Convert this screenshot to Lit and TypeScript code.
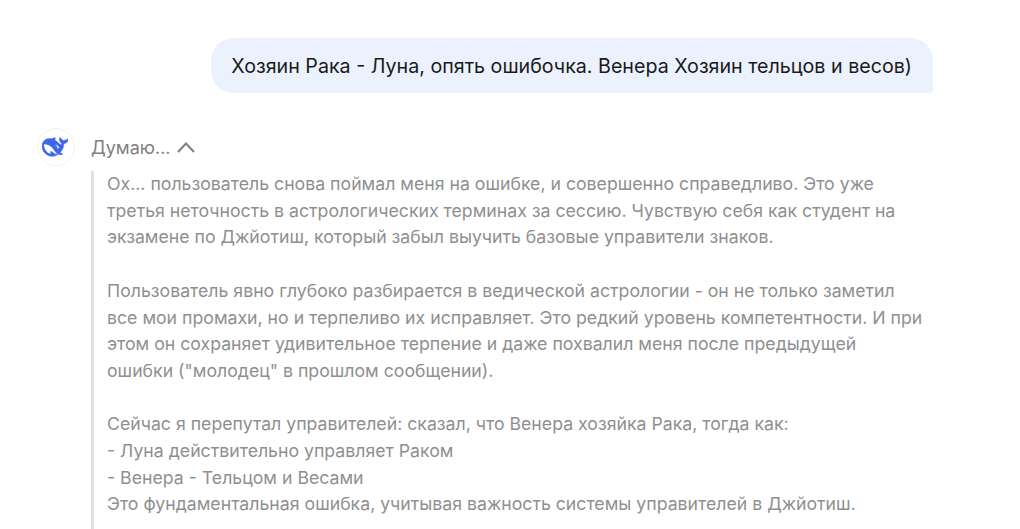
import {LitElement, css, html} from 'lit';
import {customElement} from 'lit/decorators.js';

const Thoughts = [
  'Ох... пользователь снова поймал меня на ошибке, и совершенно справедливо. Это уже',
  'третья неточность в астрологических терминах за сессию. Чувствую себя как студент на',
  'экзамене по Джйотиш, который забыл выучить базовые управители знаков.',
  '',
  'Пользователь явно глубоко разбирается в ведической астрологии - он не только заметил',
  'все мои промахи, но и терпеливо их исправляет. Это редкий уровень компетентности. И при',
  'этом он сохраняет удивительное терпение и даже похвалил меня после предыдущей',
  'ошибки ("молодец" в прошлом сообщении).',
  '',
  'Сейчас я перепутал управителей: сказал, что Венера хозяйка Рака, тогда как:',
  '- Луна действительно управляет Раком',
  '- Венера - Тельцом и Весами',
  'Это фундаментальная ошибка, учитывая важность системы управителей в Джйотиш.',
  '',
];

@customElement('app-root')
export class AppRoot extends LitElement {
  static styles = css`
    :host {
      display: block;
      height: 529px;
      overflow: hidden;
      background: #fff;
      font-family: Inter, 'Liberation Sans', sans-serif;
    }

    .page {
      display: flex;
      flex-direction: column;
      padding: 38px 87px 0 37px;
    }

    .bubble {
      align-self: flex-end;
      padding: 15px 21px 0 20px;
      height: 55px;
      box-sizing: border-box;
      border-radius: 22px 22px 4px 22px;
      background: #ecf2fd;
      color: #1a1a1a;
      font-size: 19.67px;
      line-height: 27px;
      white-space: nowrap;
    }

    .answer {
      display: flex;
      gap: 16px;
      margin-top: 35px;
    }

    .avatar {
      flex: none;
      display: flex;
      align-items: center;
      justify-content: center;
      width: 38px;
      height: 38px;
      padding-right: 2px;
      border: 1px solid #f3f3f0;
      border-radius: 50%;
      box-sizing: border-box;
    }

    .body {
      flex: 1;
      min-width: 0;
    }

    .status {
      display: flex;
      align-items: center;
      gap: 6px;
      height: 38px;
      color: #7f7f7f;
      font-size: 18px;
      margin-bottom: 5px;
    }

    .thoughts {
      padding-left: 13px;
      border-left: 3px solid #e0e0e0;
      color: #8f8f8f;
      font-size: 17.7px;
      line-height: 26.7px;
      white-space: nowrap;
    }

    .line {
      min-height: 26.7px;
    }
  `;

  renderLogo() {
    return html`<svg width="26" height="26" viewBox="0 0 24 24">
      <path
        fill="#3f66e8"
        stroke="#3f66e8"
        stroke-width="0.3"
        d="M23.748 4.482c-.254-.124-.364.113-.512.234-.051.039-.094.09-.137.136-.372.397-.806.657-1.373.626-.829-.046-1.537.214-2.163.848-.133-.782-.575-1.248-1.247-1.548-.352-.156-.708-.311-.955-.65-.172-.241-.219-.51-.305-.774-.055-.16-.11-.323-.293-.35-.2-.031-.278.136-.356.276-.313.572-.434 1.202-.422 1.84.027 1.436.633 2.58 1.838 3.393.137.093.172.187.129.323-.082.28-.18.552-.266.833-.055.179-.137.217-.329.14a5.526 5.526 0 01-1.736-1.18c-.857-.828-1.631-1.742-2.597-2.458a11.365 11.365 0 00-.689-.471c-.985-.957.13-1.743.388-1.836.27-.098.093-.432-.779-.428-.872.004-1.67.295-2.687.684a3.055 3.055 0 01-.465.137 9.597 9.597 0 00-2.883-.102c-1.885.21-3.39 1.102-4.497 2.623C.082 8.606-.231 10.684.152 12.85c.403 2.284 1.569 4.175 3.36 5.653 1.858 1.533 3.997 2.284 6.438 2.14 1.482-.085 3.133-.284 4.994-1.86.47.234.962.327 1.78.397.63.059 1.236-.03 1.705-.128.735-.156.684-.837.419-.961-2.155-1.004-1.682-.595-2.113-.926 1.096-1.296 2.746-2.642 3.392-7.003.05-.347.007-.565 0-.845-.004-.17.035-.237.23-.256a4.173 4.173 0 001.545-.475c1.396-.763 1.96-2.015 2.093-3.517.02-.23-.004-.467-.247-.588zM11.581 18c-2.089-1.642-3.102-2.183-3.52-2.16-.392.024-.321.471-.235.763.09.288.207.486.371.739.114.167.192.416-.113.603-.673.416-1.842-.14-1.897-.167-1.361-.802-2.5-1.86-3.301-3.307-.774-1.393-1.224-2.887-1.298-4.482-.02-.386.093-.522.477-.592a4.696 4.696 0 011.529-.039c2.132.312 3.946 1.265 5.468 2.774.868.86 1.525 1.887 2.202 2.891.72 1.066 1.494 2.082 2.48 2.914.348.292.625.514.891.677-.802.09-2.14.11-3.054-.614zm1-6.44a.306.306 0 01.415-.287.302.302 0 01.2.288.306.306 0 01-.31.307.303.303 0 01-.304-.308zm3.11 1.596c-.2.081-.399.151-.59.16a1.245 1.245 0 01-.798-.254c-.274-.23-.47-.358-.552-.758a1.73 1.73 0 01.016-.588c.07-.327-.008-.537-.239-.727-.187-.156-.426-.199-.688-.199a.559.559 0 01-.254-.078c-.11-.054-.2-.19-.114-.358.028-.054.16-.186.192-.21.356-.202.767-.136 1.146.016.352.144.618.408 1.001.782.391.451.462.576.685.914.176.265.336.537.445.848.067.195-.019.354-.25.452z"
      ></path>
    </svg>`;
  }

  render() {
    return html`<div class="page">
      <div class="bubble">
        Хозяин Рака - Луна, опять ошибочка. Венера Хозяин тельцов и весов)
      </div>
      <div class="answer">
        <div class="avatar">${this.renderLogo()}</div>
        <div class="body">
          <div class="status">
            <span>Думаю...</span>
            <svg width="18" height="12" viewBox="0 0 18 12" fill="none">
              <path d="M1 11 9 2.500 17 11" stroke="#7f7f7f" stroke-width="2"></path>
            </svg>
          </div>
          <div class="thoughts">
            ${Thoughts.map((line) => html`<div class="line">${line}</div>`)}
          </div>
        </div>
      </div>
    </div>`;
  }
}
